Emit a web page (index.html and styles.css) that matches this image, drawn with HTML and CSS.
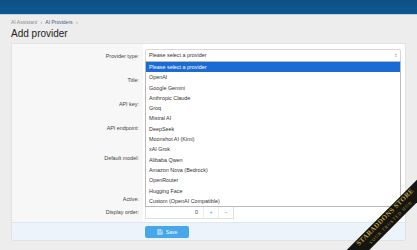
FILE: index.html
```html
<!DOCTYPE html>
<html lang="en">
<head>
  <meta charset="UTF-8">
  <title>Add provider</title>
  <link rel="stylesheet" href="styles.css">
</head>
<body>

  <div class="topbar"></div>

  <div class="page">
    <div class="crumbs"><span>AI Assistant</span> <i>›</i> <b>AI Providers</b> <i>›</i></div>
    <h1>Add provider</h1>

    <form class="panel">
      <div class="row row-select">
        <label>Provider type:</label>
        <div class="field">
          <div class="select">Please select a provider <span class="arrows">&#x2195;</span></div>
          <ul class="dropdown">
            <li class="active">Please select a provider</li>
            <li>OpenAI</li>
            <li>Google Gemini</li>
            <li>Anthropic Claude</li>
            <li>Groq</li>
            <li>Mistral AI</li>
            <li>DeepSeek</li>
            <li>Moonshot AI (Kimi)</li>
            <li>xAI Grok</li>
            <li>Alibaba Qwen</li>
            <li>Amazon Nova (Bedrock)</li>
            <li>OpenRouter</li>
            <li>Hugging Face</li>
            <li>Custom (OpenAI Compatible)</li>
          </ul>
        </div>
      </div>
      <div class="row"><label>Title:</label><div class="field"><div class="input"></div></div></div>
      <div class="row"><label>API key:</label><div class="field"><div class="input"></div></div></div>
      <div class="row"><label>API endpoint:</label><div class="field"><div class="input"></div></div></div>
      <div class="row row-model"><label>Default model:</label><div class="field"><div class="input"></div></div></div>
      <div class="row row-active"><label>Active:</label><div class="field"></div></div>
      <div class="row row-order">
        <label>Display order:</label>
        <div class="field">
          <div class="number">
            <span class="num">0</span>
            <span class="step">+</span>
            <span class="step">&minus;</span>
          </div>
        </div>
      </div>

      <div class="submit">
        <button type="button" class="save">
          <svg width="6" height="6" viewBox="0 0 12 12"><path d="M1.5 1.5h7l2 2v7h-9z M3.5 1.5v3h4v-3 M3.5 10.5v-3h5v3" fill="none" stroke="#fff" stroke-width="1.2"/></svg>
          Save
        </button>
      </div>
    </form>
  </div>

  <div class="ribbon">
    <div class="ribbon-big">STARADDONS STORE</div>
    <div class="ribbon-small">YOUR TRUSTED HUB</div>
  </div>

</body>
</html>
```

FILE: styles.css
```css
html {
  overflow: hidden;
}

body {
  margin: 0;
  background: #ededed;
  font-family: 'Liberation Sans', Arial, sans-serif;
  color: #333;
  height: 250px;
  position: relative;
  overflow: hidden;
}

.topbar {
  height: 14px;
  background: linear-gradient(#0f4f86, #0e5892);
  border-bottom: 1px solid #c3cfdb;
}

.page {
  padding: 0 11px;
}

.crumbs {
  margin-top: 4px;
  height: 6px;
  line-height: 6px;
  font-size: 5px;
  color: #8a8a8a;
}

.crumbs b {
  font-weight: normal;
  color: #44607d;
}

.crumbs i {
  font-style: normal;
  margin: 0 2px;
}

h1 {
  margin: 2px 0 0;
  font-size: 10px;
  line-height: 13px;
  font-weight: normal;
  color: #222;
  height: 13px;
}

.panel {
  margin-top: 3px;
  width: 393px;
  background: #fff;
  border: 1px solid #e2e2e2;
  border-radius: 2px;
  font-size: 5.4px;
}

.row {
  display: grid;
  grid-template-columns: 131px 1fr;
  height: 24px;
}

.row label {
  background: #f7f7f7;
  text-align: right;
  padding: 9px 4px 0 0;
  color: #444;
}

.field {
  position: relative;
  padding: 5px 4px 0 2px;
}

.select {
  height: 11px;
  border: 1px solid #d8d8d8;
  border-radius: 2px;
  padding-left: 3px;
  line-height: 11px;
  color: #333;
  position: relative;
}

.arrows {
  position: absolute;
  right: 3px;
  top: 0;
  font-size: 5px;
  color: #555;
}

.dropdown {
  position: absolute;
  left: 2px;
  right: 4px;
  top: 17px;
  margin: 0;
  padding: 0;
  list-style: none;
  background: #fff;
  border: 1px solid #b9b9b9;
  z-index: 2;
}

.dropdown li {
  height: 10.3px;
  line-height: 10.3px;
  padding-left: 3px;
  color: #333;
}

.dropdown li.active {
  background: #1a6bd3;
  color: #fff;
}

.input {
  height: 11px;
  border: 1px solid #d8d8d8;
  border-radius: 2px;
}

.row-model { height: 36px; }
.row-model label { padding-top: 15px; }

.row-active { height: 26px; }
.row-active label { padding-top: 20px; }

.row-order { height: 20px; }
.row-order label { padding-top: 7px; }
.row-order .field { padding-top: 4px; }

.number {
  width: 87px;
  height: 11px;
  border: 1px solid #e0e0e0;
  display: flex;
  line-height: 11px;
  color: #444;
}

.num {
  flex: 1;
  text-align: right;
  padding-right: 5px;
}

.step {
  width: 14px;
  text-align: center;
  border-left: 1px solid #eee;
  color: #47a7eb;
}

.step + .step { color: #888; }

.submit {
  background: #edf3fb;
  border-top: 1px solid #dfe6ee;
  padding: 3px 0 2px 133px;
}

.save {
  width: 44px;
  height: 12px;
  border: none;
  border-radius: 2px;
  background: #47a7eb;
  color: #fff;
  font-family: inherit;
  font-size: 5px;
  display: flex;
  align-items: center;
  justify-content: center;
  gap: 3px;
  padding: 0;
}

.ribbon {
  position: absolute;
  left: 303px;
  top: 212px;
  width: 170px;
  height: 16px;
  transform: rotate(-45deg);
  background: #141410;
  color: #b89c3f;
  text-align: center;
  font-family: 'Liberation Serif', serif;
  z-index: 5;
}

.ribbon-big {
  font-size: 7px;
  font-weight: bold;
  letter-spacing: 0.3px;
  line-height: 9px;
}

.ribbon-small {
  font-size: 4.5px;
  letter-spacing: 0.9px;
  line-height: 6px;
}
```
